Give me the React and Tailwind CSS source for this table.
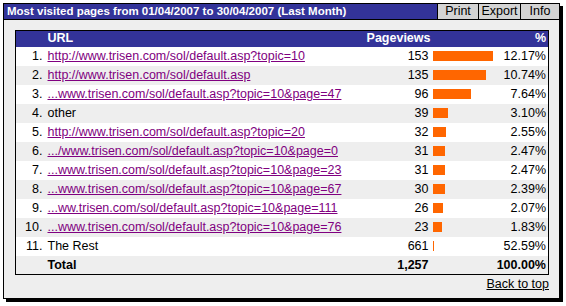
import React from "react";

const rows = [
  { n: 1, url: "http://www.trisen.com/sol/default.asp?topic=10", link: true, views: 153, pct: "12.17%" },
  { n: 2, url: "http://www.trisen.com/sol/default.asp", link: true, views: 135, pct: "10.74%" },
  { n: 3, url: "...www.trisen.com/sol/default.asp?topic=10&page=47", link: true, views: 96, pct: "7.64%" },
  { n: 4, url: "other", link: false, views: 39, pct: "3.10%" },
  { n: 5, url: "http://www.trisen.com/sol/default.asp?topic=20", link: true, views: 32, pct: "2.55%" },
  { n: 6, url: ".../www.trisen.com/sol/default.asp?topic=10&page=0", link: true, views: 31, pct: "2.47%" },
  { n: 7, url: "...www.trisen.com/sol/default.asp?topic=10&page=23", link: true, views: 31, pct: "2.47%" },
  { n: 8, url: "...www.trisen.com/sol/default.asp?topic=10&page=67", link: true, views: 30, pct: "2.39%" },
  { n: 9, url: "...ww.trisen.com/sol/default.asp?topic=10&page=111", link: true, views: 26, pct: "2.07%" },
  { n: 10, url: "...www.trisen.com/sol/default.asp?topic=10&page=76", link: true, views: 23, pct: "1.83%" },
  { n: 11, url: "The Rest", link: false, views: 661, pct: "52.59%", bar: 1 },
];

export default function App() {
  return (
    <div className="w-[566px] h-[306px] bg-white p-[3px] font-['Liberation_Sans',Arial,sans-serif] text-[12.5px] text-black">
      <div className="w-[557px] h-[296px] border border-black bg-[#eeeeee] shadow-[3px_3px_0_#000] flex flex-col">
        {/* title bar */}
        <div className="flex h-[16px] bg-[#333399] border-b border-black">
          <div className="flex-1 pl-[3px] leading-[15px] text-white font-bold text-[11.5px]">
            Most visited pages from 01/04/2007 to 30/04/2007 (Last Month)
          </div>
          <div className="flex bg-[#d4d4d4] leading-[15px]">
            <div className="w-[41px] border-l border-black text-center">Print</div>
            <div className="w-[42px] border-l border-black text-center">Export</div>
            <div className="w-[39px] border-l border-black text-center">Info</div>
          </div>
        </div>

        <div className="px-[11px] pt-[10px]">
          <table className="w-[534px] border border-black border-collapse bg-white">
            <thead>
              <tr className="bg-[#333399] text-white h-[16px] leading-[15px]">
                <th className="w-[32px]"></th>
                <th className="text-left font-bold">URL</th>
                <th className="font-bold text-right pr-[2px]">Pageviews</th>
                <th></th>
                <th className="text-right pr-[2px] font-bold">%</th>
              </tr>
            </thead>
            <tbody>
              {rows.map((r, i) => (
                <tr key={r.n} className={`h-[19px] ${i % 2 ? "bg-[#eeeeee]" : "bg-white"}`}>
                  <td className="text-right pr-[5px] w-[32px]">{r.n}.</td>
                  <td className="text-left">
                    {r.link ? (
                      <span className="text-[#800080] underline">{r.url}</span>
                    ) : (
                      r.url
                    )}
                  </td>
                  <td className="text-right w-[70px] pr-[4px]">{r.views}</td>
                  <td className="w-[64px]">
                    <div
                      className="h-[10px] bg-[#ff6600]"
                      style={{ width: r.bar ? r.bar : Math.round((r.views / 153) * 60) }}
                    />
                  </td>
                  <td className="text-right pr-[2px] w-[52px]">{r.pct}</td>
                </tr>
              ))}
              <tr className="h-[19px] bg-[#eeeeee] font-bold">
                <td></td>
                <td className="text-left">Total</td>
                <td className="text-right pr-[4px]">1,257</td>
                <td></td>
                <td className="text-right pr-[2px]">100.00%</td>
              </tr>
            </tbody>
          </table>
          <div className="w-[534px] text-right leading-[14px] pt-[2px]">
            <span className="underline">Back to top</span>
          </div>
        </div>
      </div>
    </div>
  );
}
